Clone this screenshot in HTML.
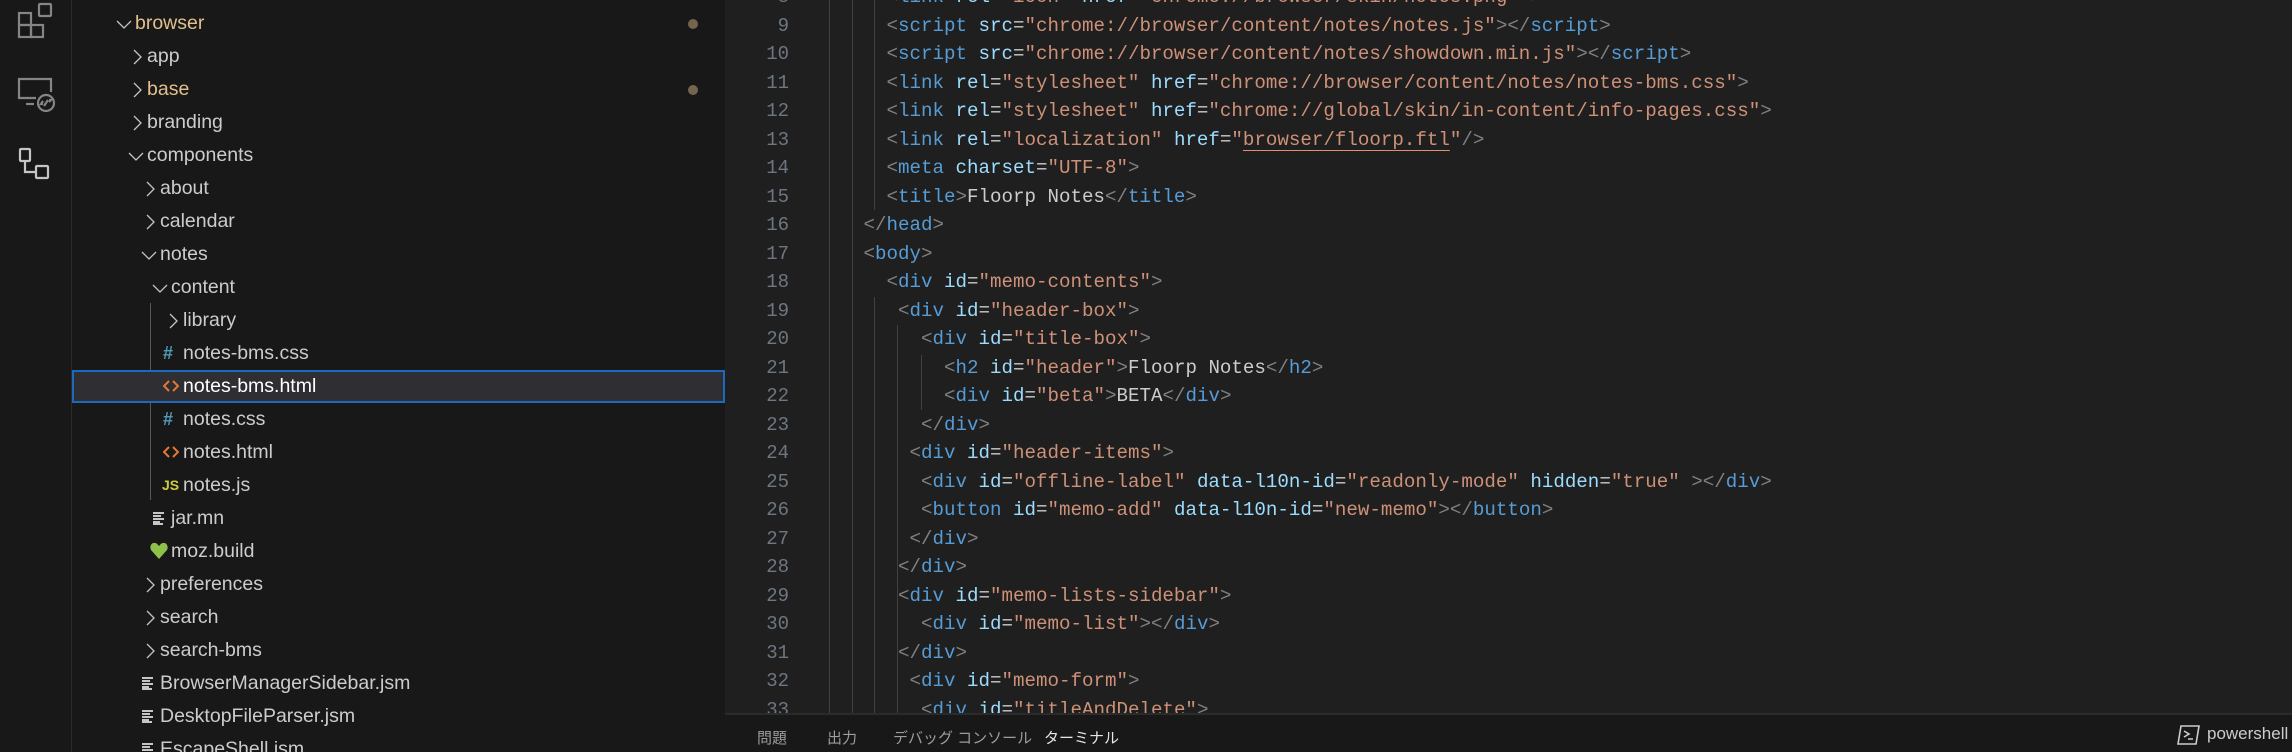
<!DOCTYPE html>
<html><head><meta charset="utf-8"><style>
*{margin:0;padding:0;box-sizing:border-box}
html{overflow:hidden;width:2292px;height:752px}
body{width:2292px;height:752px;overflow:hidden;background:#1f1f1f;position:relative;font-family:"Liberation Sans",sans-serif}
#act{position:absolute;left:0;top:0;width:72px;height:752px;background:#181818;border-right:1px solid #2b2b2b}
#exp{position:absolute;left:72px;top:0;width:653px;height:752px;background:#181818}
#tree{position:absolute;left:0;top:0;width:725px;height:752px;overflow:hidden}
.r{position:absolute;left:0;width:653px;height:33px;line-height:33px;font-size:19.5px;color:#cccccc;white-space:nowrap}
.r span.t{position:absolute;top:0}
.r svg{position:absolute}
.sel{background:#2f2f33;box-shadow:inset 0 0 0 2px #1b6ac0;color:#fff}
.dot{position:absolute;left:616px;top:12px;width:10px;height:10px;border-radius:50%;background:#74664e}
#ed{position:absolute;left:725px;top:0;width:1567px;height:713px;background:#1f1f1f;overflow:hidden}
.ln{position:absolute;left:0;width:64px;text-align:right;font-family:"Liberation Mono",monospace;font-size:19px;color:#6e7681;height:28.5px;line-height:28.5px}
.cl{position:absolute;font-family:"Liberation Mono",monospace;font-size:19.17px;white-space:pre;height:28.5px;line-height:28.5px;color:#cccccc}
.b{color:#808080}.g{color:#569cd6}.a{color:#9cdcfe}.s{color:#ce9178}
.gd{position:absolute;width:1px;background:#404040}
#pn{position:absolute;left:725px;top:713px;width:1567px;height:39px;background:#181818;border-top:2px solid #2b2b2b;overflow:hidden}
.tab{position:absolute;top:12px;font-size:15px;color:#9d9d9d;font-family:"Liberation Sans","Noto Sans CJK JP",sans-serif}
</style></head><body>
<div id="act">
<svg style="position:absolute;left:16px;top:2px" width="40" height="38" viewBox="0 0 40 38" fill="none" stroke="#858585" stroke-width="2.2"><rect x="3" y="11" width="12" height="12"/><rect x="3" y="23" width="12" height="12"/><rect x="15" y="23" width="12" height="12"/><rect x="23" y="2" width="12" height="12" rx="1"/></svg>
<svg style="position:absolute;left:16px;top:76px" width="40" height="38" viewBox="0 0 40 38" fill="none" stroke="#858585" stroke-width="2.2"><path d="M20 22H3V3h32v13"/><path d="M10 28h8"/><circle cx="30" cy="27" r="8"/><path d="M27 25l-2 3 2 0M33 26l2-2-2 0M28 30l4-6"/></svg>
<svg style="position:absolute;left:16px;top:146px" width="40" height="38" viewBox="0 0 40 38" fill="none" stroke="#c5c5c5" stroke-width="2.2"><rect x="4" y="3" width="10" height="12" rx="1"/><rect x="20" y="20" width="12" height="12" rx="1"/><path d="M9 15v11h11"/></svg>
</div>
<div id="exp">
<div style="position:absolute;left:78px;top:303px;width:1px;height:197px;background:#585858"></div>
</div>
<div id="tree"></div>
<div id="ed"></div>
<div id="pn">
<span class="tab" style="left:32px">問題</span>
<span class="tab" style="left:102px">出力</span>
<span class="tab" style="left:168px">デバッグ コンソール</span>
<span class="tab" style="left:319px;color:#e7e7e7">ターミナル</span>
<svg style="position:absolute;left:1452px;top:9px" width="24" height="22" viewBox="0 0 24 22" fill="none" stroke="#cccccc" stroke-width="1.6"><path d="M4 2h18l-3 18H1z"/><path d="M7 7l5 3-5 3M11 15h5"/></svg>
<span class="tab" style="left:1482px;top:9px;font-size:17px;color:#cccccc">powershell</span>
</div>
<script>
var rows=[
['browser',0,'d',1,'#e2c08d',1],['app',1,'c'],['base',1,'c',0,'#e2c08d',1],['branding',1,'c'],['components',1,'d'],
['about',2,'c'],['calendar',2,'c'],['notes',2,'d'],['content',3,'d'],['library',4,'c'],
['notes-bms.css',4,'css'],['notes-bms.html',4,'html',0,0,0,1],['notes.css',4,'css'],['notes.html',4,'html'],['notes.js',4,'js'],
['jar.mn',3,'txt'],['moz.build',3,'heart'],['preferences',2,'c'],['search',2,'c'],['search-bms',2,'c'],
['BrowserManagerSidebar.jsm',2,'txt'],['DesktopFileParser.jsm',2,'txt'],['EscapeShell.jsm',2,'txt']];
var tx=[135,147,160,171,183];
var h='';
rows.forEach(function(r,i){
 var top=6.5+i*33;var x=tx[r[1]];
 var cls='r'+(r[6]?' sel':'');
 h+='<div class="'+cls+'" style="left:72px;top:'+top+'px;'+(r[4]?'color:'+r[4]:'')+'">';
 var ix=x-72;
 if(r[2]=='c')h+='<svg style="left:'+(ix-16)+'px;top:8px" width="12" height="18" viewBox="0 0 12 18" fill="none" stroke="#c5c5c5" stroke-width="1.3"><path d="M3 2l7 7-7 7"/></svg>';
 if(r[2]=='d')h+='<svg style="left:'+(ix-20)+'px;top:11px" width="18" height="12" viewBox="0 0 18 12" fill="none" stroke="#c5c5c5" stroke-width="1.3"><path d="M2 3l7 7 7-7"/></svg>';
 if(r[2]=='css')h+='<span class="t" style="left:'+(ix-20)+'px;color:#519aba;font-weight:bold;font-size:18px">#</span>';
 if(r[2]=='html')h+='<svg style="left:'+(ix-20)+'px;top:9px" width="16" height="14" viewBox="0 0 16 14" fill="none" stroke="#e37933" stroke-width="2"><path d="M6 2L1 7l5 5M10 2l5 5-5 5"/></svg>';
 if(r[2]=='js')h+='<span class="t" style="left:'+(ix-21)+'px;color:#cbcb41;font-weight:bold;font-size:14px">JS</span>';
 if(r[2]=='txt')h+='<svg style="left:'+(ix-18)+'px;top:9px" width="14" height="14" viewBox="0 0 14 14" fill="#c5c5c5"><rect x="0" y="1" width="11" height="2"/><rect x="0" y="4" width="8" height="2"/><rect x="0" y="7" width="11" height="2"/><rect x="0" y="10" width="7" height="2"/><rect x="0" y="12" width="10" height="2"/></svg>';
 if(r[2]=='heart')h+='<svg style="left:'+(ix-21)+'px;top:7px" width="18" height="18" viewBox="0 0 18 18" fill="#8dc149"><path d="M9 17L1 8C-1 4 2 0 5 1c2 0 3 2 4 3 1-1 2-3 4-3 3-1 6 3 4 7z"/></svg>';
 h+='<span class="t" style="left:'+ix+'px">'+r[0]+'</span>';
 if(r[5])h+='<div class="dot"></div>';
 h+='</div>';
});
document.getElementById('tree').innerHTML=h;
function tag(n,attrs,close,selfc,inner,endn){
 var o='<span class="b">&lt;</span><span class="g">'+n+'</span>';
 (attrs||[]).forEach(function(a){o+=' <span class="a">'+a[0]+'</span>=<span class="s">"'+(a[2]?'<span style="text-decoration:underline;text-decoration-color:#e0926a;text-underline-offset:5px">'+a[1]+'</span>':a[1])+'"</span>'});
 if(selfc)o+='<span class="b">/&gt;</span>';else o+='<span class="b">'+(close||'')+'&gt;</span>';
 if(inner!==undefined){o+=inner;}
 if(endn)o+='<span class="b">&lt;/</span><span class="g">'+endn+'</span><span class="b">&gt;</span>';
 return o;
}
function end(n){return '<span class="b">&lt;/</span><span class="g">'+n+'</span><span class="b">&gt;</span>'}
var L=[
[8,5,tag('link',[['rel','icon'],['href','chrome://browser/skin/notes.png']],' ')],
[9,5,tag('script',[['src','chrome://browser/content/notes/notes.js']],'',0,'','script')],
[10,5,tag('script',[['src','chrome://browser/content/notes/showdown.min.js']],'',0,'','script')],
[11,5,tag('link',[['rel','stylesheet'],['href','chrome://browser/content/notes/notes-bms.css']])],
[12,5,tag('link',[['rel','stylesheet'],['href','chrome://global/skin/in-content/info-pages.css']])],
[13,5,tag('link',[['rel','localization'],['href','browser/floorp.ftl',1]],'',1)],
[14,5,tag('meta',[['charset','UTF-8']])],
[15,5,tag('title',[],'',0,'Floorp Notes','title')],
[16,3,end('head')],
[17,3,tag('body')],
[18,5,tag('div',[['id','memo-contents']])],
[19,6,tag('div',[['id','header-box']])],
[20,8,tag('div',[['id','title-box']])],
[21,10,tag('h2',[['id','header']],'',0,'Floorp Notes','h2')],
[22,10,tag('div',[['id','beta']],'',0,'BETA','div')],
[23,8,end('div')],
[24,7,tag('div',[['id','header-items']])],
[25,8,tag('div',[['id','offline-label'],['data-l10n-id','readonly-mode'],['hidden','true']],' ',0,'','div')],
[26,8,tag('button',[['id','memo-add'],['data-l10n-id','new-memo']],'',0,'','button')],
[27,7,end('div')],
[28,6,end('div')],
[29,6,tag('div',[['id','memo-lists-sidebar']])],
[30,8,tag('div',[['id','memo-list']],'',0,'','div')],
[31,6,end('div')],
[32,7,tag('div',[['id','memo-form']])],
[33,8,tag('div',[['id','titleAndDelete']])]];
var o='';
L.forEach(function(l){var t=26+(l[0]-9)*28.5-14.25;
 o+='<div class="ln" style="top:'+t+'px">'+l[0]+'</div>';
 o+='<div class="cl" style="left:'+(104+l[1]*11.5)+'px;top:'+t+'px">'+l[2]+'</div>';});
var G=[[104,0,713],[127,0,713],[149,0,210],[149,297,713],[172,325,713],[196,355,410]];
G.forEach(function(g){o+='<div class="gd" style="left:'+g[0]+'px;top:'+g[1]+'px;height:'+(g[2]-g[1])+'px"></div>'});
document.getElementById('ed').innerHTML=o;
</script>
</body></html>
